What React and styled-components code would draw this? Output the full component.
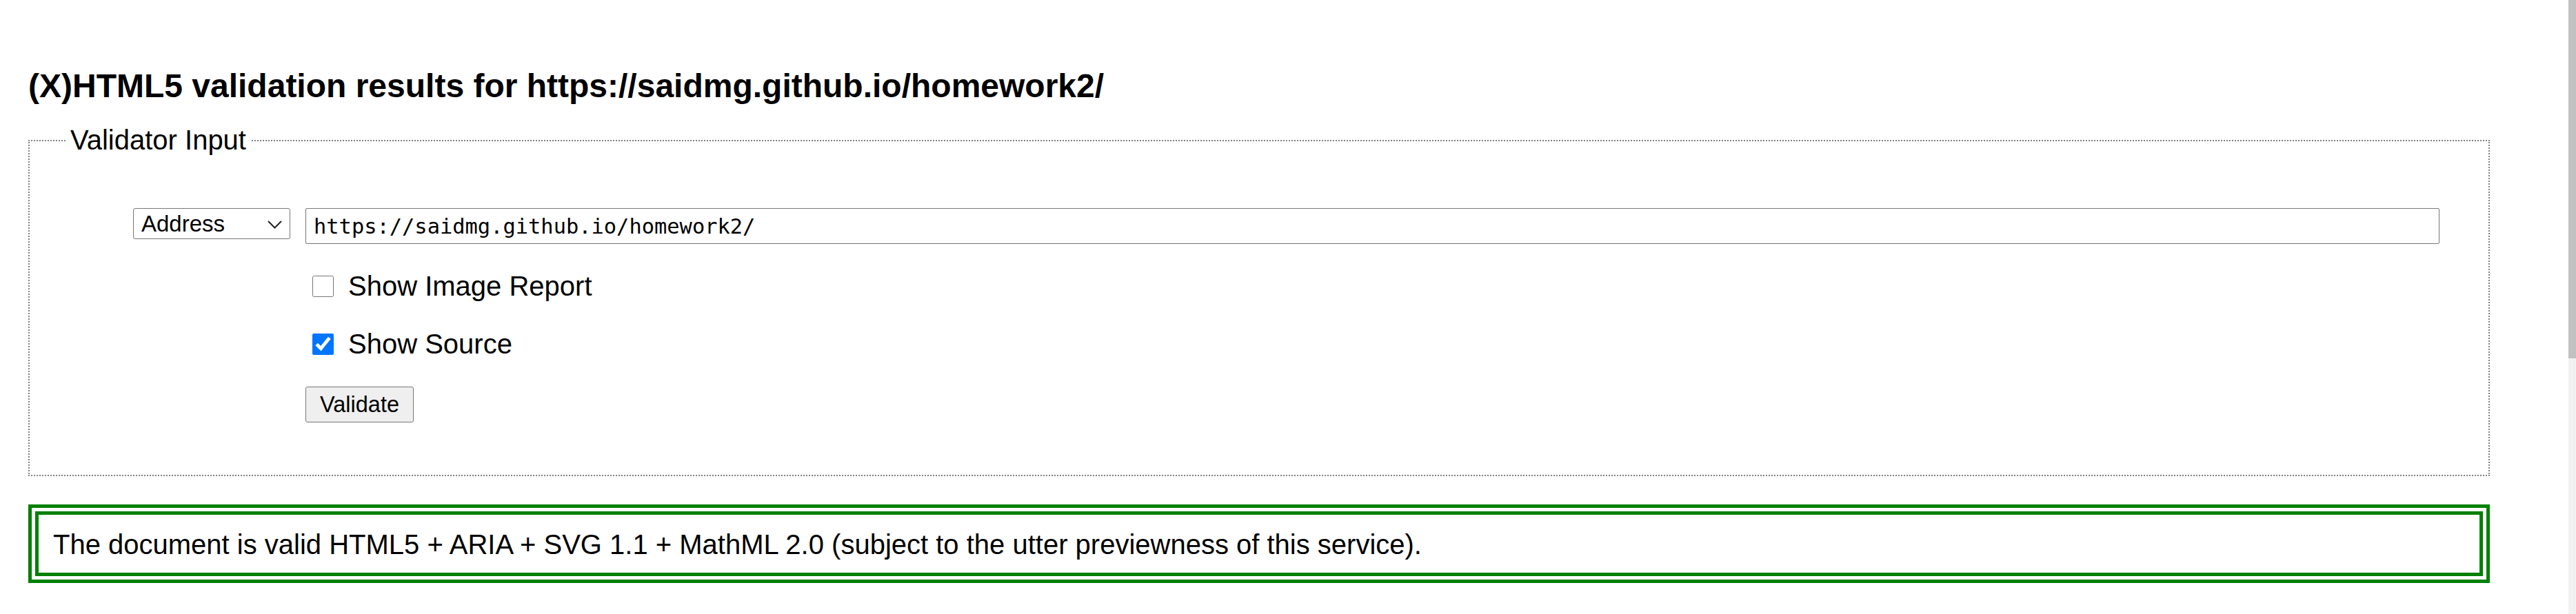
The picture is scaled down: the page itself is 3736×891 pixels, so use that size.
import React from 'react';
import styled, { createGlobalStyle } from 'styled-components';

const GlobalStyle = createGlobalStyle`
  html, body { margin: 0; padding: 0; background: #fff; }
  body {
    font-family: "Liberation Sans", Arial, Helvetica, sans-serif;
    color: #000;
  }
`;

const Page = styled.main`
  padding: 0 125px 0 41px;
`;

const Title = styled.h2`
  margin: 97px 0 0;
  font-size: 48px;
  font-weight: bold;
  line-height: normal;
`;

const Fieldset = styled.fieldset`
  margin: 29px 0 0;
  padding: 0;
  min-width: 0;
  border: 2px dotted #808080;
`;

const Legend = styled.legend`
  margin-left: 52px;
  padding: 0 7px;
  font-size: 40px;
  line-height: normal;
`;

const FormGrid = styled.div`
  display: grid;
  grid-template-columns: 228px 1fr;
  column-gap: 22px;
  row-gap: 39px;
  align-items: start;
  padding: 76px 71px 76px 150px;
`;

const SelectWrap = styled.div`
  position: relative;
  width: 228px;
  height: 45px;
`;

const Select = styled.select`
  appearance: none;
  -webkit-appearance: none;
  width: 100%;
  height: 100%;
  box-sizing: border-box;
  margin: 0;
  padding: 0 0 0 11px;
  border: 1px solid #767676;
  border-radius: 3px;
  background: #fff;
  color: #000;
  font-family: "Liberation Sans", Arial, sans-serif;
  font-size: 33px;
`;

const Chevron = styled.svg`
  position: absolute;
  right: 12px;
  top: 18px;
  width: 21px;
  height: 12px;
  pointer-events: none;
`;

const UrlInput = styled.input`
  width: 100%;
  height: 52px;
  box-sizing: border-box;
  margin: 0;
  padding: 0 11px;
  border: 1px solid #767676;
  border-radius: 2px;
  font-family: "DejaVu Sans Mono", "Liberation Mono", monospace;
  font-size: 30.4px;
  color: #000;
  background: #fff;
`;

const CheckRow = styled.label`
  grid-column: 2;
  display: flex;
  align-items: center;
  font-size: 40px;
  line-height: normal;
`;

const Checkbox = styled.input`
  width: 31px;
  height: 31px;
  margin: 0 21px 0 10px;
  accent-color: #0075ff;
`;

const Button = styled.button`
  grid-column: 2;
  justify-self: start;
  height: 52px;
  margin: 0;
  padding: 0 20px;
  border: 1px solid #767676;
  border-radius: 3px;
  background: #efefef;
  color: #000;
  font-family: "Liberation Sans", Arial, sans-serif;
  font-size: 32.5px;
`;

const Success = styled.p`
  margin: 41px 0 0;
  border: 15px double #008000;
  padding: 21px 21px 18px;
  font-size: 40px;
  line-height: normal;
`;

const ScrollTrack = styled.div`
  position: fixed;
  top: 0;
  right: 0;
  bottom: 0;
  width: 11px;
  background: #f1f1f1;
`;

const ScrollThumb = styled.div`
  width: 100%;
  height: 520px;
  background: #c1c1c1;
`;

export default function App() {
  return (
    <>
      <GlobalStyle />
      <Page>
        <Title>(X)HTML5 validation results for https://saidmg.github.io/homework2/</Title>
        <Fieldset>
          <Legend>Validator Input</Legend>
          <FormGrid>
            <SelectWrap>
              <Select defaultValue="address">
                <option value="address">Address</option>
                <option value="file">File Upload</option>
                <option value="text">Text Field</option>
              </Select>
              <Chevron viewBox="0 0 21 12" fill="none">
                <path d="M1 1l9.5 9.5L20 1" stroke="#222" strokeWidth="2" />
              </Chevron>
            </SelectWrap>
            <UrlInput type="url" defaultValue="https://saidmg.github.io/homework2/" />
            <CheckRow>
              <Checkbox type="checkbox" />
              Show Image Report
            </CheckRow>
            <CheckRow>
              <Checkbox type="checkbox" defaultChecked />
              Show Source
            </CheckRow>
            <Button type="button">Validate</Button>
          </FormGrid>
        </Fieldset>
        <Success>
          The document is valid HTML5 + ARIA + SVG 1.1 + MathML 2.0 (subject to the utter previewness of this service).
        </Success>
      </Page>
      <ScrollTrack>
        <ScrollThumb />
      </ScrollTrack>
    </>
  );
}
